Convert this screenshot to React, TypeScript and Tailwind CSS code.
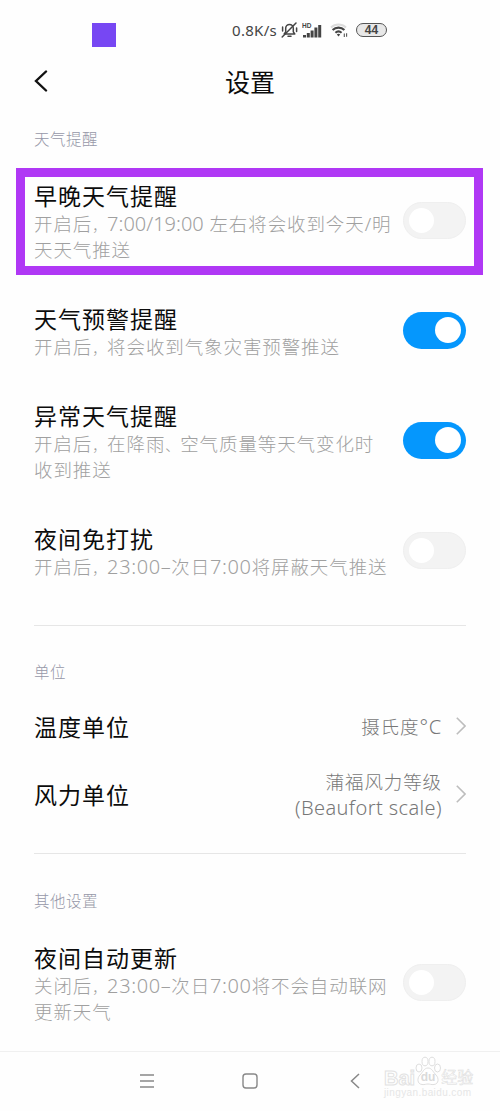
import React, { useState } from 'react';

interface SwitchProps {
  on: boolean;
  onToggle: () => void;
}

const Switch: React.FC<SwitchProps> = ({ on, onToggle }) => (
  <button
    role="switch"
    aria-checked={on}
    onClick={onToggle}
    className={
      on
        ? 'flex h-[37px] w-[63px] shrink-0 items-center justify-end rounded-full bg-[#0597fd] pr-[5px]'
        : 'flex h-[37px] w-[63px] shrink-0 items-center rounded-full border border-[#efefef] bg-[#f3f3f3] pl-[5px]'
    }
  >
    <span className={on ? 'size-[26px] rounded-full bg-white' : 'size-[25px] rounded-full bg-white'} />
  </button>
);

// Latin digits inside the Chinese descriptions
const Num: React.FC<{ children: React.ReactNode; tight?: boolean }> = ({ children, tight }) => (
  <span className={tight ? 'text-[20px] tracking-normal' : 'text-[20px] tracking-[0.6px]'}>{children}</span>
);

// Narrow punctuation
const Punct: React.FC<{ children: React.ReactNode }> = ({ children }) => (
  <span className="text-[14px]">{children}</span>
);

interface ToggleItemProps {
  title: string;
  lines: React.ReactNode[];
  initial?: boolean;
  highlighted?: boolean;
}

const ToggleItem: React.FC<ToggleItemProps> = ({ title, lines, initial = false, highlighted = false }) => {
  const [on, setOn] = useState(initial);

  return (
    <div className="relative flex items-center justify-between">
      {highlighted && (
        <div className="pointer-events-none absolute -top-[12px] -left-[18px] h-[107px] w-[467px] border-[9px] border-[#b038f5]" />
      )}
      <div>
        <h3 className="h-[31px] text-[23px] leading-[32px] tracking-[1px] whitespace-nowrap text-[#0c0c0c]">{title}</h3>
        {lines.map((line, idx) => (
          <p key={idx} className="h-[26px] text-[18.5px] leading-[26px] font-light tracking-[0.9px] whitespace-nowrap text-[#a0a0a0]">
            {line}
          </p>
        ))}
      </div>
      <div className="-mt-[3px] flex">
        <Switch on={on} onToggle={() => setOn(prev => !prev)} />
      </div>
    </div>
  );
};

const SectionLabel: React.FC<{ children: React.ReactNode }> = ({ children }) => (
  <h2 className="h-6 text-[15.5px] leading-6 font-light tracking-[0.5px] text-[#9698a8]">{children}</h2>
);

const ArrowRight = () => (
  <svg className="mb-[2px] ml-[14px] h-[18px] w-[10px] shrink-0" viewBox="0 0 10 18" fill="none" stroke="#bdbdbd" strokeWidth="1.6">
    <path d="M0.8 0.8L9 9L0.8 17.2" />
  </svg>
);

const StatusBar = () => (
  <div className="flex h-[60px] items-center text-[#444]">
    <div className="ml-[92px] mt-[9px] size-6 shrink-0 bg-[#7747f3]" />
    <span className="ml-[116px] w-[47px] text-[15px] tracking-[0.3px] whitespace-nowrap">0.8K/s</span>
    <svg className="ml-[2px] h-4 w-[17px]" viewBox="0 0 17 16" fill="none" stroke="#444" strokeWidth="1.5" strokeLinecap="round">
      <path d="M3.2 12h10.6l-1.5-2.2V6.2a3.8 3.8 0 0 0-7.6 0v3.6z" strokeLinejoin="round" />
      <path d="M7 14.2h3M1.2 15L15 1M1.6 5v4M15.6 6v3.5" />
    </svg>
    <svg className="ml-[4px] h-[17px] w-5" viewBox="0 0 20 17" fill="#444">
      <text x="0" y="6" fontSize="6.5" fontWeight="700" fontFamily="Liberation Sans">HD</text>
      <path d="M1 13h3v2.5H1zM4.8 11h3v4.5h-3zM8.6 8.5h3v7h-3zM12.4 5.5h3v10h-3zM16.2 3h3v12.5h-3z" />
    </svg>
    <svg className="ml-[8px] h-4 w-[19px]" viewBox="0 0 19 16" fill="none">
      <path d="M1 5.4a11 11 0 0 1 15 0" stroke="#dcdcdc" strokeWidth="2" />
      <path d="M2.600 8a8.500 8.500 0 0 1 11.800 0M5.400 10.7a4.8 4.8 0 0 1 6.200 0" stroke="#444" strokeWidth="2.100" />
      <path d="M6.8 12.6a2.4 2.4 0 0 1 3.4 0L8.5 14.400z" fill="#444" />
      <path d="M14.3 15v-3.6M16.6 11.2v3.6" stroke="#555" strokeWidth="1.1" />
    </svg>
    <span className="ml-[7px] flex h-[14px] w-[31px] items-center justify-center rounded-full border-[1.5px] border-[#555] bg-[#e8e8e8] font-['Liberation_Sans'] text-[12px] leading-none font-bold">
      44
    </span>
  </div>
);

const Watermark = () => (
  <div className="absolute top-[2px] left-[384px] w-[92px] font-['Liberation_Sans','Noto_Sans_CJK_SC',sans-serif] leading-none text-white">
    <div className="flex h-[34px] items-end">
      <span className="text-[20px] font-bold [-webkit-text-stroke:1px_#e2e2e2]">Bai</span>
      <span className="relative flex h-[34px] w-[26px] items-end justify-center">
        <svg className="absolute inset-0 h-[34px] w-[26px]" viewBox="0 0 26 34" fill="#fff" stroke="#dedede" strokeWidth="1">
          <ellipse cx="4" cy="14" rx="3" ry="4" />
          <ellipse cx="10" cy="7.5" rx="3" ry="4.3" />
          <ellipse cx="17" cy="7.5" rx="3" ry="4.3" />
          <ellipse cx="22.5" cy="14" rx="3" ry="4" />
          <path d="M13 14c4 0 5 4 8 7s3 9-2 9.500c-3 .3-4-.5-6-.5s-3 .8-6 .5c-5-.5-5-6.500-2-9.500s4-7 8-7z" />
        </svg>
        <span className="relative pb-[5px] text-[12px] font-bold text-[#dadada]">du</span>
      </span>
      <span className="pb-[2px] text-[16px] [-webkit-text-stroke:0.5px_#dcdcdc]">经验</span>
    </div>
    <div className="text-[10px] tracking-[0.4px] whitespace-nowrap text-[#e6e6e6]">jingyan.baidu.com</div>
  </div>
);

export default function App() {
  return (
    <div className="flex h-[1111px] w-[500px] flex-col overflow-hidden bg-[#fefefe] font-['Noto_Sans','Noto_Sans_CJK_SC',sans-serif]">
      <StatusBar />

      <header className="grid h-11 grid-cols-3 items-center px-[34px]">
        <svg className="mb-[2px] h-[22px] w-[14px]" viewBox="0 0 14 22" fill="none" stroke="#111" strokeWidth="2.4" strokeLinecap="round">
          <path d="M12 1.500L2 11L12 20.500" />
        </svg>
        <h1 className="text-center text-[25px] leading-[44px] text-[#0c0c0c]">设置</h1>
      </header>

      <main className="flex flex-col px-[34px]">
        <section className="mt-[23px]">
          <SectionLabel>天气提醒</SectionLabel>
          <div className="mt-[29px] flex flex-col gap-10">
            <ToggleItem
              highlighted
              title="早晚天气提醒"
              lines={[<>开启后<Punct>，</Punct><Num tight>7:00/19:00</Num> 左右将会收到今天/明</>, '天天气推送']}
            />
            <ToggleItem title="天气预警提醒" initial lines={[<>开启后<Punct>，</Punct>将会收到气象灾害预警推送</>]} />
            <ToggleItem
              title="异常天气提醒"
              initial
              lines={[<>开启后<Punct>，</Punct>在降雨<Punct>、</Punct>空气质量等天气变化时</>, '收到推送']}
            />
            <ToggleItem
              title="夜间免打扰"
              lines={[<>开启后<Punct>，</Punct><Num>23:00–</Num>次日<Num>7:00</Num>将屏蔽天气推送</>]}
            />
          </div>
        </section>

        <section className="mt-[45px] border-t border-[#e6e6e6] pt-[34px]">
          <SectionLabel>单位</SectionLabel>
          <div className="mt-[27px] flex h-8 items-center">
            <span className="flex-1 text-[23px] tracking-[1px] text-[#0c0c0c]">温度单位</span>
            <span className="text-[18.5px] font-light tracking-[0.9px] text-[#777]">
              摄氏度<span className="text-[20px] tracking-[0.8px]">°C</span>
            </span>
            <ArrowRight />
          </div>
          <div className="mt-[26px] flex h-[52px] items-center">
            <span className="flex-1 text-[23px] tracking-[1px] text-[#0c0c0c]">风力单位</span>
            <span className="text-right text-[18.5px] leading-[26px] font-light tracking-[0.9px] text-[#777]">
              <span className="block h-[26px]">蒲福风力等级</span>
              <span className="block h-[26px] text-[20px] tracking-[0.4px]">(Beaufort scale)</span>
            </span>
            <ArrowRight />
          </div>
        </section>

        <section className="mt-8 border-t border-[#e6e6e6] pt-[35px]">
          <SectionLabel>其他设置</SectionLabel>
          <div className="mt-[29px]">
            <ToggleItem
              title="夜间自动更新"
              lines={[<>关闭后<Punct>，</Punct><Num>23:00–</Num>次日<Num>7:00</Num>将不会自动联网</>, '更新天气']}
            />
          </div>
        </section>
      </main>

      <nav className="relative mt-auto flex h-[60px] items-center border-t border-[#f0f0f0] pb-[2px]">
        <svg className="ml-[139px] h-4 w-4" viewBox="0 0 16 16" stroke="#888" strokeWidth="1.300">
          <path d="M1 2h14M1 8h14M1 14h14" />
        </svg>
        <svg className="ml-[87px] h-4 w-4" viewBox="0 0 16 16" fill="none" stroke="#888" strokeWidth="1.400">
          <rect x="1" y="1" width="14" height="14" rx="3" />
        </svg>
        <svg className="ml-[92px] h-4 w-[10px]" viewBox="0 0 10 16" fill="none" stroke="#888" strokeWidth="1.500">
          <path d="M9 1L1.500 8L9 15" />
        </svg>
        <Watermark />
      </nav>
    </div>
  );
}
